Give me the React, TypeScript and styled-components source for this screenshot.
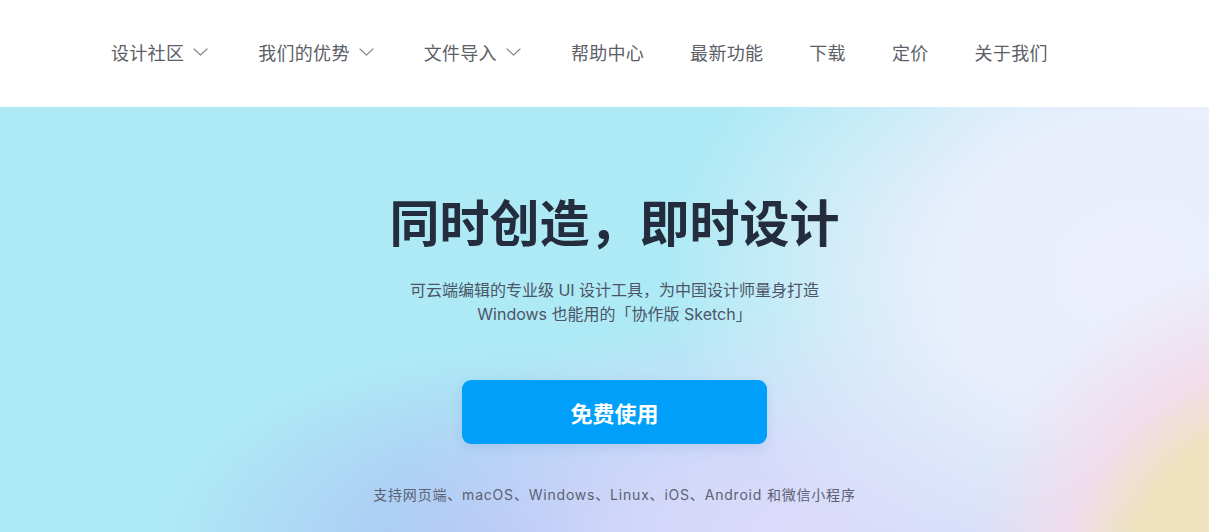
import React from "react";
import styled, { createGlobalStyle } from "styled-components";

const GlobalStyle = createGlobalStyle`
  * {
    box-sizing: border-box;
  }
  body {
    margin: 0;
    font-family: "Noto Sans", "Noto Sans CJK SC", sans-serif;
    -webkit-font-smoothing: antialiased;
  }
`;

const Page = styled.div`
  width: 100%;
  height: 532px;
  overflow: hidden;
  display: flex;
  flex-direction: column;
`;

const Header = styled.header`
  height: 107px;
  flex-shrink: 0;
  background: #ffffff;
  display: flex;
  align-items: center;
  padding-left: 111px;
  padding-bottom: 4px;
`;

const Nav = styled.nav`
  display: flex;
  align-items: center;
  gap: 46px;
`;

const NavItem = styled.a`
  display: flex;
  align-items: center;
  font-family: "Noto Sans CJK SC", sans-serif;
  font-size: 18px;
  line-height: 26px;
  letter-spacing: 0.3px;
  color: #5c6066;
  cursor: pointer;
  white-space: nowrap;
`;

const Chevron = styled.svg`
  width: 19px;
  height: 8px;
  margin-left: 9px;
  flex-shrink: 0;
`;

// hero coordinates: 1209 x 425
const Hero = styled.section`
  flex: 1;
  display: flex;
  flex-direction: column;
  align-items: center;
  padding-top: 83px;
  padding-left: 20px;
  background:
    radial-gradient(circle 340px at 1300px 490px, rgba(238, 227, 190, 1) 0%, rgba(238, 227, 190, 1) 52%, rgba(243, 219, 234, 0.9) 70%, rgba(243, 219, 234, 0) 100%),
    radial-gradient(ellipse 460px 330px at 1130px 170px, rgba(238, 239, 252, 1) 0%, rgba(236, 238, 252, 0.9) 45%, rgba(236, 238, 252, 0) 100%),
    radial-gradient(ellipse 320px 200px at 1230px 0px, rgba(228, 245, 252, 1) 0%, rgba(228, 245, 252, 0) 100%),
    radial-gradient(ellipse 420px 230px at 800px 430px, rgba(222, 218, 250, 1) 0%, rgba(216, 216, 250, 0.85) 40%, rgba(216, 216, 250, 0) 100%),
    radial-gradient(ellipse 360px 200px at 520px 440px, rgba(168, 194, 243, 1) 0%, rgba(172, 200, 244, 0.75) 45%, rgba(172, 200, 244, 0) 100%),
    #aeeaf5;
`;

const Title = styled.h1`
  margin: 0;
  font-family: "Noto Sans CJK SC", sans-serif;
  font-size: 50px;
  line-height: 60px;
  font-weight: 700;
  color: #232d3d;
`;

const Subtitle = styled.p`
  margin: 28px 0 0;
  font-family: Inter, "Noto Sans CJK SC", sans-serif;
  font-size: 16px;
  line-height: 24px;
  color: #4b5566;
  text-align: center;
`;

const PrimaryButton = styled.button`
  margin-top: 54px;
  width: 305px;
  height: 64px;
  border: none;
  border-radius: 9px;
  background: #009ff9;
  color: #ffffff;
  font-family: "Noto Sans CJK SC", sans-serif;
  font-size: 22px;
  font-weight: 700;
  cursor: pointer;
  box-shadow: 0 4px 12px rgba(40, 100, 180, 0.12);
`;

const Platforms = styled.p`
  margin: 41px 0 0;
  font-family: Inter, "Noto Sans CJK SC", sans-serif;
  font-size: 14px;
  line-height: 20px;
  letter-spacing: 0.8px;
  color: #5b6273;
`;

const navItems = [
  { label: "设计社区", menu: true },
  { label: "我们的优势", menu: true },
  { label: "文件导入", menu: true },
  { label: "帮助中心", menu: false },
  { label: "最新功能", menu: false },
  { label: "下载", menu: false },
  { label: "定价", menu: false },
  { label: "关于我们", menu: false },
];

const App = () => {
  return (
    <Page>
      <GlobalStyle />
      <Header>
        <Nav>
          {navItems.map(item => (
            <NavItem key={item.label}>
              {item.label}
              {item.menu && (
                <Chevron viewBox="0 0 19 8" fill="none">
                  <path
                    d="M1 1 L7.5 7 L14 1"
                    stroke="#8a8d93"
                    strokeWidth="1.2"
                    strokeLinecap="round"
                    strokeLinejoin="round"
                  />
                </Chevron>
              )}
            </NavItem>
          ))}
        </Nav>
      </Header>
      <Hero>
        <Title>同时创造，即时设计</Title>
        <Subtitle>
          可云端编辑的专业级 UI 设计工具，为中国设计师量身打造
          <br />
          Windows 也能用的「协作版 Sketch」
        </Subtitle>
        <PrimaryButton type="button">免费使用</PrimaryButton>
        <Platforms>
          支持网页端、macOS、Windows、Linux、iOS、Android 和微信小程序
        </Platforms>
      </Hero>
    </Page>
  );
};

export default App;
